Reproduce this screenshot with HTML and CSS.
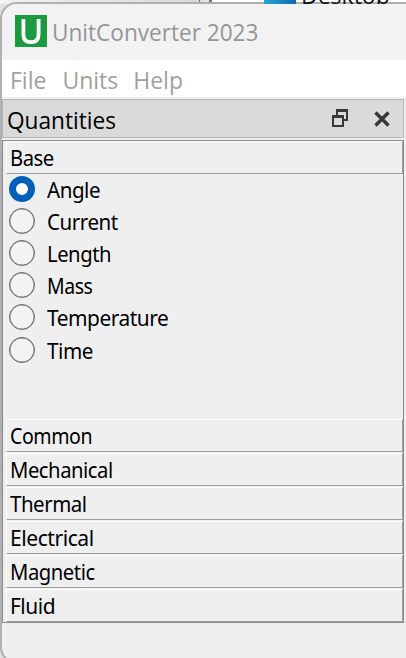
FILE: index.html
```html
<!DOCTYPE html>
<html lang="en">
<head>
<meta charset="utf-8">
<title>UnitConverter 2023</title>
<link rel="stylesheet" href="styles.css">
</head>
<body>
<div class="desktop">
  <div class="scroll-edge"></div>
</div>
<div class="window">
  <header class="titlebar">
    <svg class="logo" viewBox="0 0 32 32"><rect width="32" height="32" fill="#1b9a40"/><path d="M8.4 4v15.4c0 5.2 2.4 7.7 7.5 7.7s7.7-2.5 7.7-7.7V4" fill="none" stroke="#fff" stroke-width="3.8"/></svg>
    <span class="title">UnitConverter 2023</span>
  </header>
  <nav class="menubar"><span class="file">File</span><span class="units">Units</span><span class="help">Help</span></nav>
  <section class="dock-title">
    <span class="dock-name">Quantities</span>
    <svg class="float-icon" viewBox="0 0 16 18" fill="#35383a"><path d="M4 0h12v12h-4v-2h2V3H6v3H4z"/><path fill-rule="evenodd" d="M0 6h12v12H0zM2 9v7h8V9z"/></svg>
    <svg class="close-icon" viewBox="0 0 16 16"><path d="M1.5 1.5l13 13M14.5 1.5l-13 13" stroke="#35383a" stroke-width="3.4"/></svg>
  </section>
  <main class="toolbox">
    <div class="tab"><span class="base">Base</span></div>
    <div class="options">
      <label class="option"><i class="radio checked"></i><span class="angle">Angle</span></label>
      <label class="option"><i class="radio"></i><span class="current">Current</span></label>
      <label class="option"><i class="radio"></i><span class="length">Length</span></label>
      <label class="option"><i class="radio"></i><span class="mass">Mass</span></label>
      <label class="option"><i class="radio"></i><span class="temperature">Temperature</span></label>
      <label class="option last"><i class="radio"></i><span class="time">Time</span></label>
    </div>
    <div class="tab"><span class="common">Common</span></div>
    <div class="tab"><span class="mechanical">Mechanical</span></div>
    <div class="tab"><span class="thermal">Thermal</span></div>
    <div class="tab"><span class="electrical">Electrical</span></div>
    <div class="tab"><span class="magnetic">Magnetic</span></div>
    <div class="tab"><span class="fluid">Fluid</span></div>
  </main>
</div>
<div class="desktop-item">
  <div class="desktop-icon"></div>
  <div class="desktop-label">Desktop</div>
</div>
</body>
</html>
```
FILE: styles.css
```css
* { box-sizing: border-box; }
body { margin: 0; width: 406px; height: 658px; overflow: hidden; background: #e0e0e0; position: relative; font-family: "Noto Sans", sans-serif; }
.desktop { position: absolute; inset: 0 0 auto 0; height: 4px; overflow: hidden; background: linear-gradient(90deg, #f2f2f2, #d8d8d8 198px, #e8e8e8 210px, #fff 213px); }
.scroll-edge { position: absolute; left: 199px; top: 0; width: 13px; height: 4px; border-left: 1px solid #777; border-right: 3px solid #777; }
.desktop-item { position: absolute; left: 264px; top: 0; width: 142px; height: 4px; overflow: hidden; }
.desktop-icon { width: 32px; height: 4px; background: linear-gradient(90deg, #22a7d2, #1268b5); }
.desktop-label { position: absolute; left: 37px; top: -20px; font: 23px/30px "Open Sans", sans-serif; color: #111; }
.window { position: absolute; left: 0; top: 2px; width: 426px; height: 662px; border: 2px solid #b0b0b0; border-radius: 17px; overflow: hidden; background: #efefef; }
.titlebar { height: 56px; background: #f2f2f2; padding: 11px 0 0 13px; display: flex; }
.logo { width: 32px; height: 32px; }
.title { margin-left: 5px; font: 23px/34px "Open Sans", sans-serif; color: #969696; white-space: nowrap; transform: scaleX(.982); transform-origin: left; }
.menubar { height: 37px; background: #fff; display: flex; padding-left: 8px; gap: 16px; font: 23px/41px "Open Sans", sans-serif; color: #a0a0a0; }
.help { margin-left: -1px; }
.dock-title { margin-top: 2px; height: 39px; width: 402px; border: 1px solid #b6b6b6; background: #dadada; display: flex; padding-left: 4px; }
.dock-name { font: 23px/40px "Open Sans", sans-serif; color: #000; transform: scaleX(.985); transform-origin: left; }
.float-icon { width: 16px; height: 18px; margin: 9px 0 0 auto; }
.close-icon { width: 16px; height: 16px; margin: 11px 13px 0 25px; }
.float-icon + .close-icon { margin-left: 26px; }
.toolbox { margin-top: 2px; width: 402px; height: 483px; border: 1px solid #868a91; padding-left: 3px; }
.tab { height: 33px; border: 1px solid; border-color: #fff #9c9c9c #9c9c9c #fff; padding-left: 3px; margin-bottom: 1px; font-size: 22px; letter-spacing: -.5px; white-space: nowrap; }
.tab span, .option span { display: block; width: max-content; transform-origin: left; }
.tab span { line-height: 30px; }
.options { height: 244px; padding: 0 0 0 3px; }
.option { height: 32px; display: flex; align-items: flex-start; font-size: 22px; line-height: 28px; letter-spacing: -.5px; }
.option span { margin-left: 12px; }
.last { margin-top: 1px; }
.radio { width: 26px; height: 26px; margin-top: 1px; border: 1px solid #666; border-radius: 50%; background: #f3f3f3; box-shadow: inset 0 0 0 .5px #777; }
.checked { border: 7.5px solid #005fb8; background: #fff; box-shadow: none; background-clip: padding-box; }
.base { transform: scaleX(.92); }
.angle { transform: scaleX(.935); }
.current { transform: scaleX(.935); }
.length { transform: scaleX(.92); }
.mass { transform: scaleX(.885); }
.temperature { transform: scaleX(.95); }
.time { transform: scaleX(.94); }
.common { transform: scaleX(.89); }
.mechanical { transform: scaleX(.92); }
.thermal { transform: scaleX(.93); }
.electrical { transform: scaleX(.96); }
.magnetic { transform: scaleX(.92); }
.fluid { transform: scaleX(.95); }
```
